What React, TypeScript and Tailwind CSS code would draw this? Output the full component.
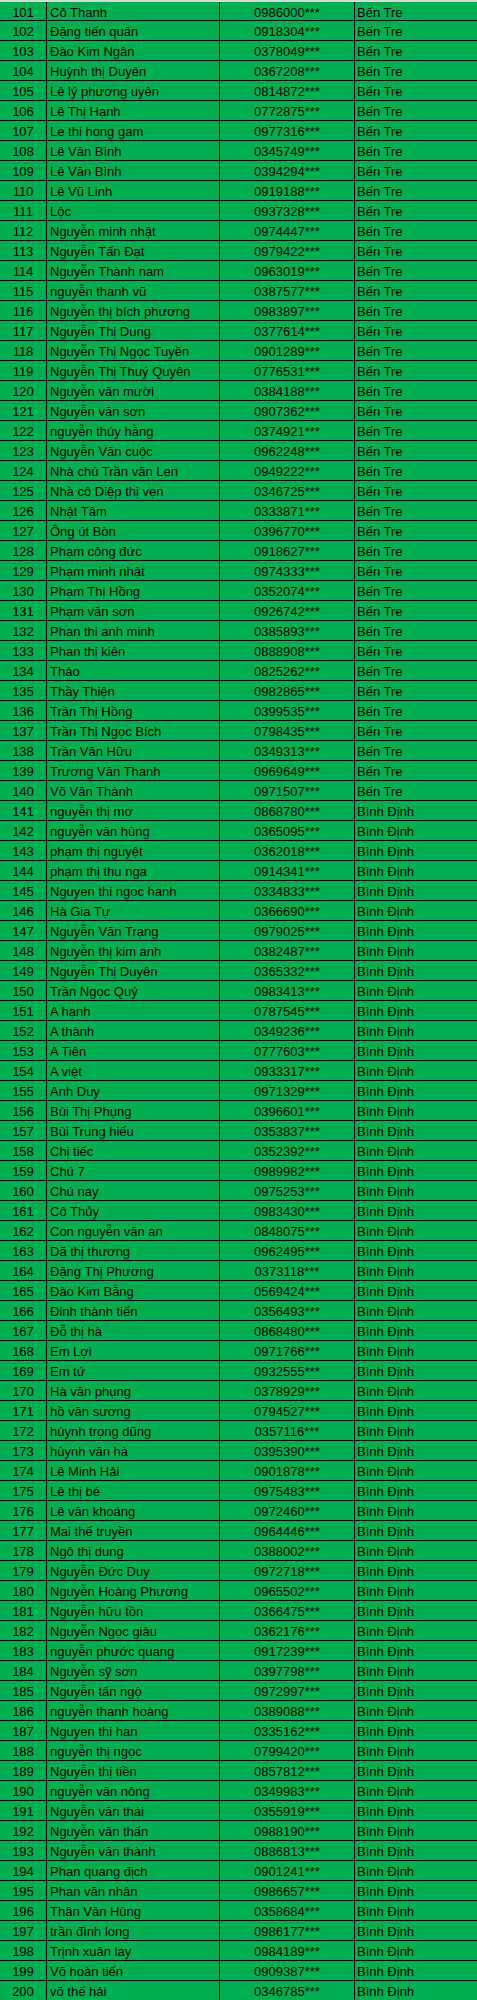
import React from "react";

const benTre: [string, string][] = [
    ["Cô Thanh", "0986000"],
    ["Đặng tiến quân", "0918304"],
    ["Đào Kim Ngân", "0378049"],
    ["Huỳnh thị Duyên", "0367208"],
    ["Lê lý phương uyên", "0814872"],
    ["Lê Thị Hạnh", "0772875"],
    ["Le thi hong gam", "0977316"],
    ["Lê Văn Bình", "0345749"],
    ["Lê Văn Bình", "0394294"],
    ["Lê Vũ Linh", "0919188"],
    ["Lộc", "0937328"],
    ["Nguyễn minh nhật", "0974447"],
    ["Nguyễn Tấn Đạt", "0979422"],
    ["Nguyễn Thành nam", "0963019"],
    ["nguyễn thanh vũ", "0387577"],
    ["Nguyễn thị bích phương", "0983897"],
    ["Nguyễn Thị Dung", "0377614"],
    ["Nguyễn Thị Ngọc Tuyền", "0901289"],
    ["Nguyễn Thị Thuý Quyên", "0776531"],
    ["Nguyễn văn mười", "0384188"],
    ["Nguyễn văn sơn", "0907362"],
    ["nguyễn thúy hằng", "0374921"],
    ["Nguyễn Văn cuộc", "0962248"],
    ["Nhà chú Trần văn Len", "0949222"],
    ["Nhà cô Diệp thị vẹn", "0346725"],
    ["Nhật Tâm", "0333871"],
    ["Ông út Bòn", "0396770"],
    ["Phạm công đức", "0918627"],
    ["Phạm minh nhật", "0974333"],
    ["Phạm Thị Hồng", "0352074"],
    ["Phạm văn sơn", "0926742"],
    ["Phan thi anh minh", "0385893"],
    ["Phan thị kiên", "0888908"],
    ["Thảo", "0825262"],
    ["Thầy Thiện", "0982865"],
    ["Trần Thị Hồng", "0399535"],
    ["Trần Thị Ngọc Bích", "0798435"],
    ["Trần Văn Hữu", "0349313"],
    ["Trương Văn Thanh", "0969649"],
    ["Võ Văn Thành", "0971507"],
];

const binhDinh: [string, string][] = [
    ["nguyễn thị mơ", "0868780"],
    ["nguyễn văn hùng", "0365095"],
    ["phạm thị nguyệt", "0362018"],
    ["phạm thị thu nga", "0914341"],
    ["Nguyen thi ngoc hanh", "0334833"],
    ["Hà Gia Tự", "0366690"],
    ["Nguyễn Văn Trạng", "0979025"],
    ["Nguyễn thị kim anh", "0382487"],
    ["Nguyễn Thị Duyên", "0365332"],
    ["Trần Ngọc Quý", "0983413"],
    ["A hạnh", "0787545"],
    ["A thành", "0349236"],
    ["A Tiên", "0777603"],
    ["A việt", "0933317"],
    ["Anh Duy", "0971329"],
    ["Bùi Thị Phụng", "0396601"],
    ["Bùi Trung hiếu", "0353837"],
    ["Chị tiếc", "0352392"],
    ["Chú 7", "0989982"],
    ["Chú nay", "0975253"],
    ["Cô Thủy", "0983430"],
    ["Con nguyễn văn an", "0848075"],
    ["Dã thị thương", "0962495"],
    ["Đặng Thị Phương", "0373118"],
    ["Đào Kim Bằng", "0569424"],
    ["Đinh thành tiến", "0356493"],
    ["Đỗ thị hà", "0868480"],
    ["Em Lợi", "0971766"],
    ["Em tứ", "0932555"],
    ["Hà văn phụng", "0378929"],
    ["hồ văn sương", "0794527"],
    ["hùynh trọng dũng", "0357116"],
    ["hùynh văn hà", "0395390"],
    ["Lê Minh Hải", "0901878"],
    ["Lê thị bé", "0975483"],
    ["Lê văn khoáng", "0972460"],
    ["Mai thế truyền", "0964446"],
    ["Ngô thị dung", "0388002"],
    ["Nguyễn Đức Duy", "0972718"],
    ["Nguyễn Hoàng Phương", "0965502"],
    ["Nguyễn hữu tồn", "0366475"],
    ["Nguyễn Ngọc giàu", "0362176"],
    ["nguyễn phước quang", "0917239"],
    ["Nguyễn sỹ sơn", "0397798"],
    ["Nguyễn tấn ngộ", "0972997"],
    ["nguyễn thanh hoàng", "0389088"],
    ["Nguyen thi han", "0335162"],
    ["nguyễn thị ngọc", "0799420"],
    ["Nguyễn thị tiền", "0857812"],
    ["nguyễn văn nông", "0349983"],
    ["Nguyễn văn thái", "0355919"],
    ["Nguyễn văn thấn", "0988190"],
    ["Nguyễn văn thành", "0886813"],
    ["Phan quang địch", "0901241"],
    ["Phan văn nhân", "0986657"],
    ["Thân Văn Hùng", "0358684"],
    ["trần đình long", "0986177"],
    ["Trịnh xuân lay", "0984189"],
    ["Võ hoàn tiến", "0909387"],
    ["võ thế hải", "0346785"],
];

const rows = [
    ...benTre.map(([name, phone]) => ({ name, phone, place: "Bến Tre" })),
    ...binhDinh.map(([name, phone]) => ({ name, phone, place: "Bình Định" })),
];

export default function App() {
    return (
        <div className="w-[477px] bg-[#00b050] text-black text-[13px] font-['Liberation_Sans',Arial,sans-serif] overflow-hidden">
            <div className="h-[2px] bg-[#d9d9d9]"></div>

            {rows.map((row, i) => (
                <div
                    key={i}
                    className={
                        "grid grid-cols-[47px_173px_135px_1fr] border-b border-black leading-[19px] " +
                        (i === 0 ? "h-[19px]" : "h-5")
                    }
                >
                    <div className="border-r border-black text-center pt-[1px]">{101 + i}</div>
                    <div className="border-r border-black pl-[3px] pt-[1px] whitespace-nowrap">{row.name}</div>
                    <div className="border-r border-black text-center pt-[1px]">{row.phone}***</div>
                    <div className="pl-[2px] pt-[1px] whitespace-nowrap">{row.place}</div>
                </div>
            ))}
        </div>
    );
}
